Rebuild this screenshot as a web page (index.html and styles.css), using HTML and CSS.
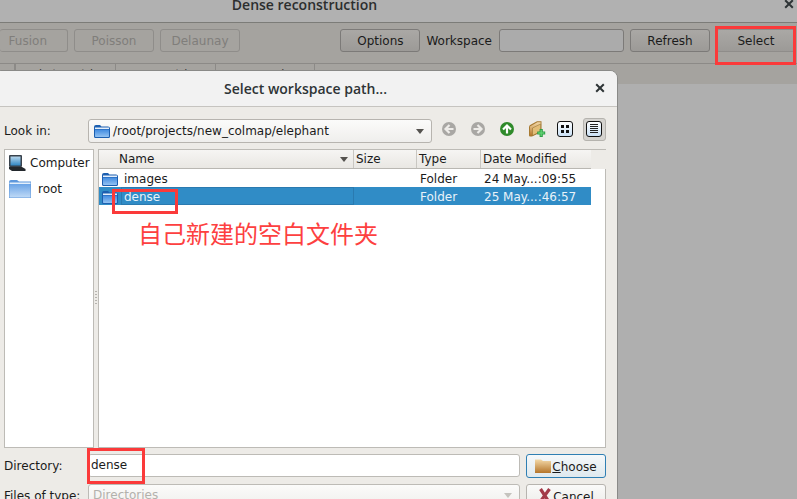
FILE: index.html
```html
<!DOCTYPE html>
<html lang="zh">

<head>
    <meta charset="UTF-8">
    <meta name="viewport" content="width=device-width, initial-scale=1.0">
    <title>Dense reconstruction</title>
    <link rel="stylesheet" href="styles.css">
</head>

<body>
    <svg class="defs" width="0" height="0" aria-hidden="true">
        <defs>
            <linearGradient id="blueFold" x1="0" y1="0" x2="0" y2="1">
                <stop offset="0" stop-color="#3f8ae0" />
                <stop offset="1" stop-color="#93c2f2" />
            </linearGradient>
            <linearGradient id="paleFold" x1="0" y1="0" x2="0" y2="1">
                <stop offset="0" stop-color="#6aa3e6" />
                <stop offset="1" stop-color="#c0daf6" />
            </linearGradient>
            <linearGradient id="tanFold" x1="0" y1="0" x2="0" y2="1">
                <stop offset="0" stop-color="#f3d9a8" />
                <stop offset="1" stop-color="#b5752a" />
            </linearGradient>
            <linearGradient id="screen" x1="0" y1="0" x2="0" y2="1">
                <stop offset="0" stop-color="#b8d8ee" />
                <stop offset="1" stop-color="#2f86c4" />
            </linearGradient>
            <linearGradient id="tile" x1="0" y1="0" x2="0" y2="1">
                <stop offset="0" stop-color="#ffffff" />
                <stop offset="1" stop-color="#c9e0f5" />
            </linearGradient>
            <symbol id="folder" viewBox="0 0 16 15">
                <path d="M0 3 Q0 1 2 1 H6 L7.5 2.5 H14 Q16 2.5 16 4.5 V12.5 Q16 14 14.5 14 H1.5 Q0 14 0 12.5 Z" fill="#1c5fb0" />
                <path d="M1 5.5 H15 V12.3 Q15 13 14.3 13 H1.7 Q1 13 1 12.3 Z" fill="url(#blueFold)" />
                <path d="M1 3.5 H15 V5 H1 Z" fill="#e4effb" />
            </symbol>
            <symbol id="close" viewBox="0 0 10 10">
                <path d="M1.2 1.2 L8.8 8.8 M8.8 1.2 L1.2 8.8" stroke="#2e3436" stroke-width="2" fill="none" />
            </symbol>
        </defs>
    </svg>

    <div class="mainwin">
        <header class="titlebar">
            <span class="titlebar-text">Dense reconstruction</span>
            <svg class="titlebar-close" width="10" height="10"><use href="#close" /></svg>
        </header>
        <div class="toolbar">
            <button class="btn btn-off btn-clipped">Fusion</button>
            <button class="btn btn-off">Poisson</button>
            <button class="btn btn-off">Delaunay</button>
            <span class="spacer"></span>
            <button class="btn">Options</button>
            <span class="tool-label">Workspace</span>
            <span class="tool-input"></span>
            <button class="btn">Refresh</button>
            <button class="btn btn-select">Select</button>
        </div>
        <div class="tabstrip">
            <span class="tab tab-first"></span>
            <span class="tab">photometric</span>
            <span class="tab">geometric</span>
            <span class="tab tab-last">normal</span>
        </div>
        <div class="mainwin-body"></div>
    </div>

    <section class="dialog">
        <header class="dialog-title">
            <span>Select workspace path...</span>
            <svg class="dialog-close" width="10" height="10"><use href="#close" /></svg>
        </header>
        <div class="dialog-body">
            <div class="lookin-row">
                <label class="row-label">Look in:</label>
                <div class="combo combo-path">
                    <svg class="combo-icon" width="16" height="15"><use href="#folder" /></svg>
                    <span>/root/projects/new_colmap/elephant</span>
                    <span class="combo-arrow"></span>
                </div>
                <div class="nav-icons">
                    <svg width="16" height="16" viewBox="0 0 16 16"><circle cx="8" cy="8" r="7" fill="#a9a7a4" /><path d="M12.5 8 H5 M8.5 4 L4.5 8 L8.5 12" fill="none" stroke="#eeece9" stroke-width="2.2" /></svg>
                    <svg width="16" height="16" viewBox="0 0 16 16"><circle cx="8" cy="8" r="7" fill="#a9a7a4" /><path d="M3.5 8 H11 M7.5 4 L11.5 8 L7.5 12" fill="none" stroke="#eeece9" stroke-width="2.2" /></svg>
                    <svg width="16" height="16" viewBox="0 0 16 16"><circle cx="8" cy="8" r="7" fill="#2f8a2a" /><path d="M8 12.5 V5 M4 8.5 L8 4.5 L12 8.5" fill="none" stroke="#fff" stroke-width="2.2" /></svg>
                    <svg class="icon-newfolder" width="18" height="18" viewBox="0 0 18 18"><path d="M1 7 Q1 5 3 4.5 L9 1.2 H13.5 V12 L4 16.5 H2 Q1 16.5 1 15.5 Z" fill="#a87a32" /><path d="M2 6.5 L9.4 2.2 H12.6 V11.5 L4 15.5 H2 Z" fill="url(#tanFold)" /><path d="M4.5 8 L12.6 4 V11.5 L4.5 15.5 Z" fill="#e3bd78" stroke="#8a6a2c" stroke-width=".5" /><path d="M13.2 9 V17 M9.2 13 H17.2" stroke="#2f9e47" stroke-width="3.2" /><path d="M13.2 10 V16 M10.2 13 H16.2" stroke="#5fd070" stroke-width="1.4" /></svg>
                    <span class="view-btn">
                        <svg width="16" height="16" viewBox="0 0 16 16"><rect x=".5" y=".5" width="15" height="15" rx="2.5" fill="url(#tile)" stroke="#111" /><rect x="4" y="4" width="3" height="3" fill="#111" /><rect x="9" y="4" width="3" height="3" fill="#111" /><rect x="4" y="9" width="3" height="3" fill="#111" /><rect x="9" y="9" width="3" height="3" fill="#111" /></svg>
                    </span>
                    <span class="view-btn view-btn-on">
                        <svg width="16" height="16" viewBox="0 0 16 16"><rect x=".5" y=".5" width="15" height="15" rx="2.5" fill="url(#tile)" stroke="#111" /><path d="M4 3.5 H12 M4 5.5 H12 M4 7.5 H12 M4 9.5 H12 M4 11.5 H12" stroke="#222" /></svg>
                    </span>
                </div>
            </div>

            <div class="browser">
                <aside class="sidebar">
                    <div class="side-item">
                        <svg width="18" height="17" viewBox="0 0 18 17"><rect x="1" y="0" width="13" height="12" rx="1" fill="#39424c" /><rect x="2.5" y="1.5" width="10" height="9" fill="url(#screen)" /><path d="M1 12 H14 L17.5 14 V16 H4 L1 14 Z" fill="#23282d" /></svg>
                        <span class="side-computer">Computer</span>
                    </div>
                    <div class="side-item">
                        <svg width="24" height="20" viewBox="0 0 24 20"><path d="M1 3 Q1 1 3 1 H9 L11 2.5 H23 V19 H1 Z" fill="#5f98dc" /><rect x="1.5" y="3.5" width="21" height="1.5" fill="#e4effb" /><rect x="1.5" y="5" width="21" height="13.5" fill="url(#paleFold)" /></svg>
                        <span class="side-root">root</span>
                    </div>
                </aside>
                <span class="splitter"><i class="splitter-dots"></i></span>
                <div class="files">
                    <div class="file-head">
                        <span class="col col-name head-name">Name<i class="sort-arrow"></i></span>
                        <span class="col col-size">Size</span>
                        <span class="col col-type">Type</span>
                        <span class="col col-date">Date Modified</span>
                    </div>
                    <div class="file-row">
                        <span class="col col-name"><svg width="16" height="15"><use href="#folder" /></svg>images</span>
                        <span class="col col-size"></span>
                        <span class="col col-type">Folder</span>
                        <span class="col col-date">24 May...:09:55</span>
                    </div>
                    <div class="file-row file-row-on">
                        <span class="col col-name"><svg width="16" height="15"><use href="#folder" /></svg><span class="sel-name">dense</span></span>
                        <span class="col col-size"></span>
                        <span class="col col-type">Folder</span>
                        <span class="col col-date">25 May...:46:57</span>
                    </div>
                </div>
            </div>

            <div class="form-row">
                <label class="row-label">Directory:</label>
                <div class="field">dense</div>
                <button class="dlg-btn dlg-btn-focus">
                    <svg width="16" height="15" viewBox="0 0 16 15"><path d="M0 1.5 H6 L8 3 H16 V15 H0 Z" fill="url(#tanFold)" /></svg>
                    <span class="dlg-btn-text"><u>C</u>hoose</span>
                </button>
            </div>
            <div class="form-row">
                <label class="row-label">Files of type:</label>
                <div class="field field-off">Directories<span class="combo-arrow combo-arrow-off"></span></div>
                <button class="dlg-btn dlg-btn-cancel">
                    <svg width="13" height="15" viewBox="0 0 13 15"><path d="M2.5 1 L11 14 M11.5 1 L2 14" stroke="#a33a48" stroke-width="3.2" fill="none" /></svg>
                    <span class="dlg-btn-text">Cancel</span>
                </button>
            </div>
        </div>
    </section>

    <!-- marcas rojas puestas encima de la captura -->
    <span class="mark mark-select"></span>
    <span class="mark mark-dense"></span>
    <span class="mark mark-dir"></span>
    <span class="note">自己新建的空白文件夹</span>
</body>

</html>
```

FILE: styles.css
```css
* {
    box-sizing: border-box;
}

html,
body {
    height: 100%;
}

body {
    margin: 0;
    overflow: hidden;
    background-color: #afafaf;
    font-family: "DejaVu Sans", sans-serif;
    font-size: 12px;
    color: #1b1b1b;
    position: relative;
}

.defs {
    position: absolute;
}

button {
    font: inherit;
}

/* ventana de fondo */
.mainwin {
    height: 100%;
    display: flex;
    flex-direction: column;
}

.titlebar {
    height: 23px;
    flex: none;
    background-color: #b1b1b1;
    border-bottom: 1px solid #7c7c78;
    display: flex;
    justify-content: center;
    position: relative;
}

.titlebar-text {
    font-family: "Open Sans", sans-serif;
    font-weight: 600;
    font-size: 14px;
    line-height: 10px;
    margin-right: 188px;
    color: #2c2e2e;
}

.titlebar-close {
    position: absolute;
    right: 3px;
    top: -1px;
}

.toolbar {
    height: 41px;
    flex: none;
    background-color: #a5a39f;
    border-bottom: 1px solid #8c8a87;
    display: flex;
    align-items: center;
    padding: 0 1px 5px 0;
    gap: 6px;
}

.spacer {
    flex: 1;
}

.btn {
    width: 80px;
    height: 23px;
    padding: 0;
    border: 1px solid #7c7a78;
    border-radius: 3px;
    background: linear-gradient(#aaa8a5, #9c9a97);
    color: #1b1b1b;
}

.btn-off {
    color: #807e7b;
    border-color: #8f8d8a;
    background: #a5a39f;
}

.btn-clipped {
    width: 68px;
    border-left: none;
    text-align: right;
    padding-right: 20px;
}

.btn-select {
    border-color: #8f8d8a;
}

.tool-label {
    margin-right: 1px;
}

.tool-input {
    width: 125px;
    height: 23px;
    border: 1px solid #7c7a78;
    border-radius: 3px;
    background-color: #ababab;
}

.tabstrip {
    height: 20px;
    flex: none;
    background-color: #a5a39f;
    display: flex;
    align-items: flex-start;
    padding-left: 14px;
    font-size: 11px;
    color: #333;
}

.tab {
    width: 100px;
    height: 20px;
    padding-top: 3px;
    border-left: 1px solid #8c8a87;
    text-align: center;
}

.tab-first {
    width: 0;
}

.tab-last {
    border-right: 1px solid #8c8a87;
}

.mainwin-body {
    flex: 1;
    background-color: #afafaf;
}

/* dialogo */
.dialog {
    position: absolute;
    left: -7px;
    top: 70px;
    width: 625px;
    height: 440px;
    border: 1px solid #8a8a88;
    border-radius: 8px 8px 0 0;
    background-color: #edebe7;
    display: flex;
    flex-direction: column;
    overflow: hidden;
}

.dialog-title {
    height: 36px;
    flex: none;
    background-color: #f2f2f2;
    border-bottom: 1px solid #c6c4c0;
    font-family: "Open Sans", sans-serif;
    font-weight: 600;
    font-size: 14px;
    color: #2e3436;
    display: flex;
    align-items: center;
    justify-content: center;
    position: relative;
}

.dialog-close {
    position: absolute;
    right: 12px;
    top: 12px;
}

.dialog-body {
    flex: 1;
    padding: 12px 11px 0 10px;
    display: flex;
    flex-direction: column;
}

.lookin-row {
    display: flex;
    align-items: center;
    height: 24px;
}

.row-label {
    width: 84px;
    flex: none;
}

.combo {
    display: flex;
    align-items: center;
    gap: 4px;
    height: 24px;
    border: 1px solid #b7b4af;
    border-radius: 3px;
    background: linear-gradient(#fbfbfa, #efeeec);
    padding: 0 0 0 5px;
}

.combo-path {
    width: 344px;
    flex: none;
}

.combo-icon {
    margin-right: -1px;
}

.combo-arrow {
    margin-left: auto;
    margin-right: 7px;
    border-left: 4px solid transparent;
    border-right: 4px solid transparent;
    border-top: 5px solid #55534f;
}

.nav-icons {
    display: flex;
    align-items: center;
    margin: -4px 0 0 9px;
    gap: 13px;
}

.icon-newfolder {
    margin-right: -2px;
}

.view-btn {
    width: 23px;
    height: 23px;
    margin: 0 -3.5px;
    display: flex;
    align-items: center;
    justify-content: center;
    border: 1px solid transparent;
    border-radius: 3px;
}

.view-btn-on {
    border-color: #b5b3ae;
    background-color: #d5d3cf;
}

.browser {
    height: 299px;
    flex: none;
    margin-top: 6px;
    display: flex;
}

.sidebar {
    width: 90px;
    flex: none;
    background-color: #fff;
    border: 1px solid #bdbbb6;
    padding: 1px 0 0 3px;
}

.side-item {
    display: flex;
    align-items: center;
    height: 24px;
    margin-bottom: 2px;
}

.side-computer {
    margin-left: 4px;
}

.side-root {
    margin-left: 6px;
}

.splitter {
    width: 4px;
    flex: none;
    display: flex;
    align-items: center;
    justify-content: center;
}

.splitter-dots {
    width: 2px;
    height: 15px;
    background: repeating-linear-gradient(#b5b3ae 0 1px, transparent 1px 3px);
}

.files {
    flex: 1;
    background-color: #fff;
    border: 1px solid #bdbbb6;
}

.file-head {
    height: 19px;
    display: flex;
    width: 492px;
    background: linear-gradient(#f6f5f3, #e9e7e3);
    border-bottom: 1px solid #b9b7b2;
    box-shadow: 15px 0 0 #edebe7;
}

.col {
    display: flex;
    align-items: center;
    flex: none;
}

.col-name {
    width: 255px;
}

.col-size {
    width: 63px;
    padding-left: 2px;
}

.col-type {
    width: 64px;
    padding-left: 2px;
}

.col-date {
    width: 110px;
    padding-left: 2px;
}

.file-head .col {
    border-right: 1px solid #c9c7c2;
}

.file-head .col-date {
    border-right: none;
}

.head-name {
    padding-left: 20px;
    position: relative;
}

.sort-arrow {
    position: absolute;
    right: 5px;
    top: 7px;
    border-left: 4px solid transparent;
    border-right: 4px solid transparent;
    border-top: 5px solid #55534f;
}

.file-row {
    width: 492px;
    height: 18px;
    display: flex;
}

.file-row .col {
    padding-top: 2px;
}

.file-row .col-name {
    padding-left: 3px;
    gap: 6px;
}

.file-row .col-type,
.file-row .col-date {
    padding-left: 3px;
}

.file-row-on {
    background-color: #308cc6;
    color: #e8f2f9;
}

.sel-name {
    flex: 1;
    height: 18px;
    align-self: flex-start;
    margin: -2px 0 0 -3px;
    padding-left: 2px;
    line-height: 18px;
    border: 1px solid #2a7ab0;
}

.form-row {
    display: flex;
    align-items: center;
    margin-top: 6px;
    height: 23px;
}

.form-row:last-child {
    margin-top: 7px;
}

.field {
    width: 432px;
    height: 23px;
    flex: none;
    border: 1px solid #bdbbb6;
    border-radius: 3px;
    background-color: #fff;
    padding-left: 2px;
    line-height: 21px;
    display: flex;
}

.field-off {
    color: #b3b1ac;
    padding-left: 4px;
    background: linear-gradient(#fbfbfa, #f0efed);
}

.combo-arrow-off {
    align-self: center;
    border-top-color: #c5c3be;
}

.dlg-btn {
    width: 80px;
    height: 24px;
    margin-left: 6px;
    padding: 0;
    border: 1px solid #b7b4af;
    border-radius: 3px;
    background: linear-gradient(#fafaf9, #ecebe8);
    color: #1b1b1b;
    display: flex;
    align-items: center;
    justify-content: center;
    gap: 1px;
}

.dlg-btn-text {
    padding-top: 2px;
}

.dlg-btn-focus {
    border-color: #2f7fb3;
    background: linear-gradient(#f5f8fa, #dfe9ee);
}

.dlg-btn-cancel {
    gap: 2px;
}

/* anotaciones */
.mark {
    position: absolute;
    border: 3px solid #fb3a3a;
}

.mark-select {
    left: 715px;
    top: 26px;
    width: 81px;
    height: 39px;
}

.mark-dense {
    left: 112px;
    top: 189px;
    width: 66px;
    height: 25px;
}

.mark-dir {
    left: 87px;
    top: 448px;
    width: 58px;
    height: 36px;
}

.note {
    position: absolute;
    left: 138px;
    top: 215px;
    font-family: "Noto Sans CJK SC", sans-serif;
    font-size: 24px;
    line-height: 35px;
    color: #fd4040;
    white-space: nowrap;
}
```
